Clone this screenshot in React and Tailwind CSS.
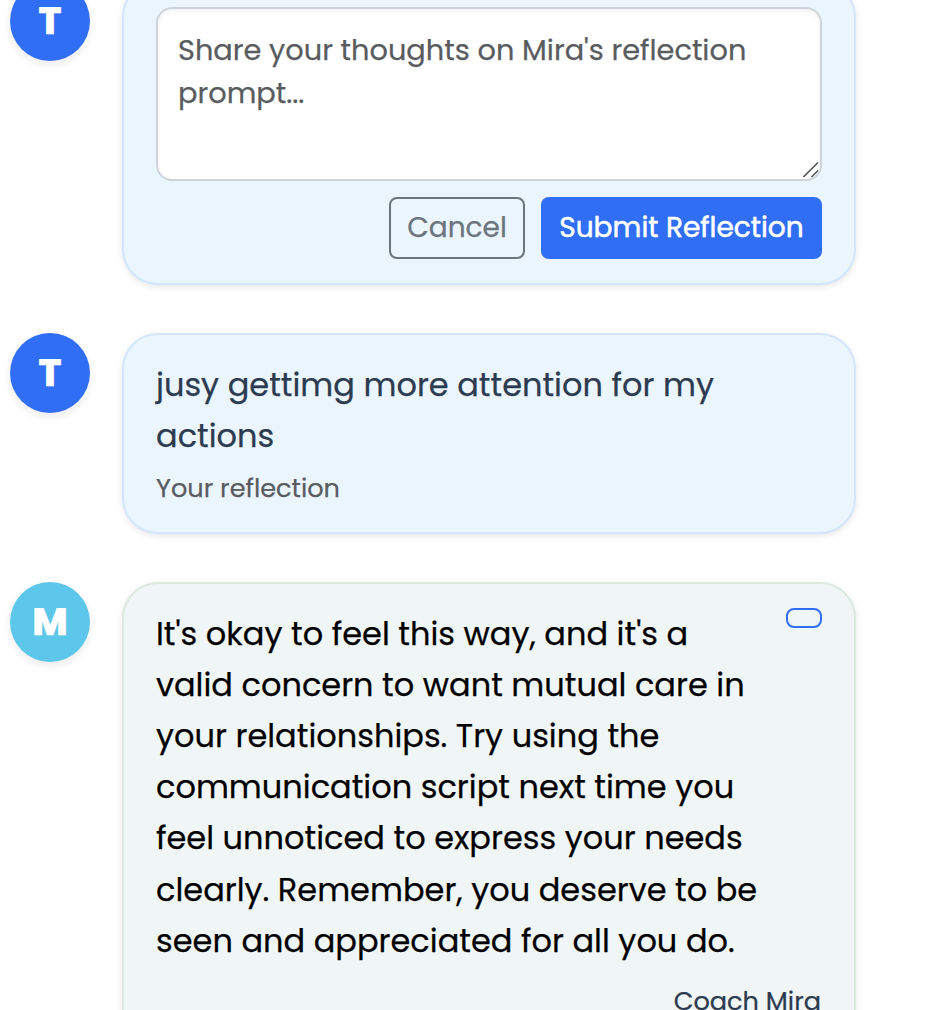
function Avatar({ letter, color }) {
  return (
    <div className={`flex size-20 shrink-0 items-center justify-center rounded-full shadow-[0_4px_8px_rgba(0,0,0,0.08)] ${color}`}>
      <span className="text-[38px] font-extrabold leading-none text-white">{letter}</span>
    </div>
  );
}

function Row({ letter, color, card, children }) {
  return (
    <div className="flex items-start gap-8">
      <Avatar letter={letter} color={color} />
      <div className={`w-[734px] rounded-[36px] border-2 px-8 py-6 shadow-[0_2px_6px_rgba(0,0,0,0.1)] ${card}`}>
        {children}
      </div>
    </div>
  );
}

const userCard = "border-[#d3e6fd] bg-[#eaf5fe]";

export default function App() {
  return (
    <main className="h-[1010px] overflow-hidden bg-white pl-2.5 font-[Poppins,Inter,sans-serif] [-webkit-text-stroke:0.25px]">
      <div className="-mt-[19px] flex flex-col gap-12">
        <Row letter="T" color="bg-[#316ef6]" card={userCard}>
          <div className="relative h-[173.8px] rounded-2xl border-2 border-[#ced4da] bg-white px-5 py-5 text-[28.8px] leading-[43.2px] text-[#595c5f] shadow-[inset_0_2px_4px_rgba(0,0,0,0.06)]">
            <p>Share your thoughts on Mira's reflection prompt...</p>
            <svg className="absolute right-px bottom-px" width="16" height="16" viewBox="0 0 16 16" fill="none" stroke="#55585b" strokeWidth="1.6">
              <path d="M.5 15 15 .5M8.5 15 15 8.5" />
            </svg>
          </div>
          <div className="mt-4 flex justify-end gap-4 text-[28px] leading-[42px]">
            <button className="h-[62px] w-34 whitespace-nowrap rounded-lg border-2 border-[#6c757d] text-[#6c757d]">
              Cancel
            </button>
            <button className="h-[62px] w-[281px] whitespace-nowrap rounded-lg bg-[#316ef6] text-white [-webkit-text-stroke:0.5px]">
              Submit Reflection
            </button>
          </div>
        </Row>

        <Row letter="T" color="bg-[#316ef6]" card={userCard}>
          <p className="text-[32px] leading-[51.2px] text-[#2d3b50]">
            jusy gettimg more attention for my actions
          </p>
          <p className="mt-2 text-[25.6px] leading-[38.4px] text-[#595c5f]">Your reflection</p>
        </Row>

        <Row letter="M" color="bg-[#5cc6eb]" card="border-[#dbe9e0] bg-[#f0f6f5]">
          <div className="flex items-start justify-between">
            <p className="w-[614px] text-[32px] leading-[51.2px] text-black">
              It's okay to feel this way, and it's a valid concern to want mutual care in your
              relationships. Try using the communication script next time you feel unnoticed to
              express your needs clearly. Remember, you deserve to be seen and appreciated for all
              you do.
            </p>
            <button aria-label="Save" className="h-5 w-9 shrink-0 rounded-lg border-2 border-[#316ef6]" />
          </div>
          <p className="mt-4 pr-px text-right text-[25.6px] leading-[38.4px] text-[#2d3b50]">Coach Mira</p>
        </Row>
      </div>
    </main>
  );
}
